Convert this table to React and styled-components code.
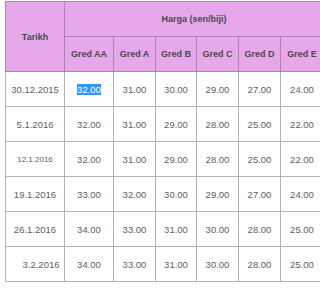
import styled, { createGlobalStyle } from 'styled-components'

const GlobalStyle = createGlobalStyle`
html, body {
  margin: 0;
  padding: 0;
  background: #fff;
  overflow: hidden;
}
`

const Wrap = styled.div`
padding: 1px 0 0 5px;
width: 315px;
overflow: hidden;
`

const Table = styled.table`
border-collapse: collapse;
table-layout: fixed;
width: 318px;
font-family: "Liberation Sans", Arial, sans-serif;
border: 1px solid #8c8c8c;
`

const Head = styled.th`
background: #e6a8ea;
color: #4a4a4a;
font-size: 9px;
font-weight: bold;
text-align: center;
vertical-align: middle;
padding: 0;
height: 34px;
border: 1px solid #a48aa6;
`

const Cell = styled.td`
color: #606060;
font-size: ${p => p.$size || 9.5}px;
text-align: center;
vertical-align: middle;
padding: 0 0 0 ${p => p.$indent || 0}px;
height: 34px;
border: 1px solid #b4b4b4;
`

const Picked = styled.span`
background: #3297fd;
color: #fff;
`

const grades = ['Gred AA', 'Gred A', 'Gred B', 'Gred C', 'Gred D', 'Gred E']
const widths = [59, 49, 42, 41, 42, 42, 43]

const rows = [
  { date: '30.12.2015', prices: ['32.00', '31.00', '30.00', '29.00', '27.00', '24.00'] },
  { date: '5.1.2016', prices: ['32.00', '31.00', '29.00', '28.00', '25.00', '22.00'] },
  { date: '12.1.2016', size: 8, prices: ['32.00', '31.00', '29.00', '28.00', '25.00', '22.00'] },
  { date: '19.1.2016', prices: ['33.00', '32.00', '30.00', '29.00', '27.00', '24.00'] },
  { date: '26.1.2016', prices: ['34.00', '33.00', '31.00', '30.00', '28.00', '25.00'] },
  { date: '3.2.2016', indent: 12, prices: ['34.00', '33.00', '31.00', '30.00', '28.00', '25.00'] },
]

function App() {
  return (
    <>
      <GlobalStyle />
      <Wrap>
        <Table>
          <colgroup>
            {widths.map((w, i) => <col key={i} style={{ width: w }} />)}
          </colgroup>
          <thead>
            <tr>
              <Head rowSpan={2}>Tarikh</Head>
              <Head colSpan={6}>Harga (sen/biji)</Head>
            </tr>
            <tr>
              {grades.map(g => <Head key={g}>{g}</Head>)}
            </tr>
          </thead>
          <tbody>
            {rows.map((r, i) => (
              <tr key={r.date}>
                <Cell $size={r.size} $indent={r.indent}>{r.date}</Cell>
                {r.prices.map((p, j) => (
                  <Cell key={j}>{i === 0 && j === 0 ? <Picked>{p}</Picked> : p}</Cell>
                ))}
              </tr>
            ))}
          </tbody>
        </Table>
      </Wrap>
    </>
  )
}

export default App
